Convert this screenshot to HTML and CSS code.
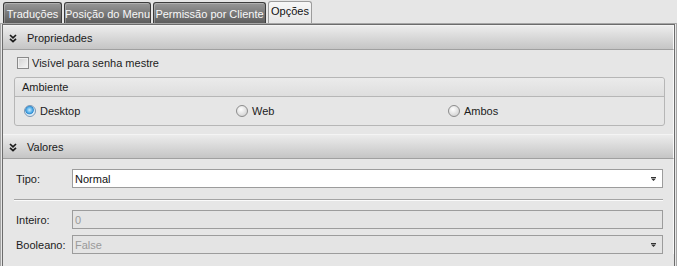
FILE: index.html
```html
<!DOCTYPE html>
<html lang="pt">
<head>
    <meta charset="UTF-8">
    <title>Opções</title>
    <link rel="stylesheet" href="styles.css">
</head>
<body>
    <div class="tabs">
        <div class="tab tab-1">Traduções</div>
        <div class="tab tab-2">Posição do Menu</div>
        <div class="tab tab-3">Permissão por Cliente</div>
        <div class="tab tab-4 active">Opções</div>
    </div>

    <div class="panel">
        <div class="panel-inner">
            <div class="section-header">
                <svg class="chevron" width="8" height="9" viewBox="0 0 8 9">
                    <path d="M1 1 L4 3.8 L7 1 M1 4.8 L4 7.6 L7 4.8" fill="none" stroke="#1a1a1a" stroke-width="1.7"/>
                </svg>
                <span>Propriedades</span>
            </div>
            <div class="section-body props">
                <label class="check-row">
                    <span class="checkbox"></span>
                    <span>Visível para senha mestre</span>
                </label>
                <div class="group">
                    <div class="group-title">Ambiente</div>
                    <div class="radio-row">
                        <div class="radio-item"><span class="radio checked"></span>Desktop</div>
                        <div class="radio-item"><span class="radio"></span>Web</div>
                        <div class="radio-item"><span class="radio"></span>Ambos</div>
                    </div>
                </div>
            </div>

            <div class="section-header">
                <svg class="chevron" width="8" height="9" viewBox="0 0 8 9">
                    <path d="M1 1 L4 3.8 L7 1 M1 4.8 L4 7.6 L7 4.8" fill="none" stroke="#1a1a1a" stroke-width="1.7"/>
                </svg>
                <span>Valores</span>
            </div>
            <div class="section-body values">
                <div class="field">
                    <div class="field-label">Tipo:</div>
                    <div class="field-box">
                        <span>Normal</span>
                        <svg class="arrow" width="5" height="4" viewBox="0 0 5 4">
                            <path d="M0 0 H5 V1 H0 Z M0 1.5 H5 L2.5 4 Z" fill="#333"/>
                        </svg>
                    </div>
                </div>
                <div class="separator"></div>
                <div class="field">
                    <div class="field-label">Inteiro:</div>
                    <div class="field-box disabled"><span>0</span></div>
                </div>
                <div class="field gap">
                    <div class="field-label">Booleano:</div>
                    <div class="field-box disabled">
                        <span>False</span>
                        <svg class="arrow" width="5" height="4" viewBox="0 0 5 4">
                            <path d="M0 0 H5 V1 H0 Z M0 1.5 H5 L2.5 4 Z" fill="#333"/>
                        </svg>
                    </div>
                </div>
            </div>
        </div>
    </div>
</body>
</html>
```

FILE: styles.css
```css
* {
    margin: 0;
    padding: 0;
    box-sizing: border-box;
}

body {
    font-family: 'Liberation Sans', Arial, sans-serif;
    font-size: 11px;
    color: #1c1c1c;
    background: #e6e6e6;
    width: 677px;
    height: 266px;
    overflow: hidden;
}

.tabs {
    display: flex;
    align-items: flex-end;
    gap: 2px;
    height: 23px;
    padding-left: 3px;
}

.tab {
    height: 21px;
    border: 1px solid #3c3c3c;
    border-bottom: none;
    border-radius: 3px 3px 0 0;
    background: linear-gradient(#979797, #5d5d5d);
    box-shadow: inset 1px 1px 0 rgba(255, 255, 255, 0.25);
    color: #f8f8f8;
    display: flex;
    align-items: center;
    justify-content: center;
    padding-top: 1px;
}

.tab-1 { width: 59px; }
.tab-2 { width: 87px; }
.tab-3 { width: 113px; }
.tab-4 { width: 44px; }

.tab.active {
    height: 22px;
    background: linear-gradient(#f7f7f7, #e6e6e6);
    border-color: #9c9c9c;
    box-shadow: none;
    color: #111;
    align-items: flex-start;
    padding-top: 3px;
}

.panel {
    border: 1px solid #a6a6a6;
    border-bottom: none;
    padding: 0 1px;
    height: 243px;
}

.panel-inner {
    border: 1px solid #6c6c6c;
    border-bottom: none;
    height: 100%;
    background: #e6e6e6;
}

.section-header {
    height: 25px;
    border-top: 1px solid #f4f4f4;
    border-bottom: 1px solid #a0a0a0;
    border-right: 1px solid #fafafa;
    background: linear-gradient(#ececec, #c5c5c5);
    display: flex;
    align-items: center;
    padding-left: 6px;
    color: #1a1a1a;
}

.chevron {
    margin-right: 10px;
    margin-top: 1px;
}

.section-body {
    border-right: 1px solid #fafafa;
}

.props {
    padding: 7px 8px 8px 11px;
}

.check-row {
    display: flex;
    align-items: center;
    height: 12px;
    padding-left: 3px;
}

.checkbox {
    width: 12px;
    height: 12px;
    border: 1px solid #8a8a8a;
    background: linear-gradient(135deg, #d2d2d2, #f6f6f6);
    box-shadow: inset 0 0 0 1px #f0f0f0;
    margin-right: 3px;
}

.group {
    margin-top: 8px;
    border: 1px solid #b6b6b6;
    border-radius: 3px;
}

.group-title {
    height: 19px;
    border-bottom: 1px solid #b6b6b6;
    background: linear-gradient(#ebebeb, #dedede);
    padding-left: 7px;
    display: flex;
    align-items: center;
    border-radius: 3px 3px 0 0;
}

.radio-row {
    display: grid;
    grid-template-columns: 212px 212px 212px;
    height: 28px;
    align-items: center;
    padding-left: 9px;
}

.radio-item {
    display: flex;
    align-items: center;
}

.radio {
    width: 12px;
    height: 12px;
    border-radius: 50%;
    border: 1px solid #8c8c8c;
    background: radial-gradient(circle at 40% 35%, #ffffff, #c8c8c8);
    margin-right: 4px;
}

.radio.checked {
    border-color: #7b97b4;
    background: radial-gradient(circle at 45% 40%, #c9ecff 0, #55aee8 35%, #2e8bd0 48%, #d9e9f5 58%, #eef2f5 100%);
}

.values {
    padding: 10px 10px 0 11px;
}

.field {
    display: flex;
    align-items: center;
}

.field.gap {
    margin-top: 6px;
}

.field-label {
    width: 56px;
    margin-left: 2px;
}

.field-box {
    flex: 1;
    height: 19px;
    border: 1px solid #9c9c9c;
    background: white;
    display: flex;
    align-items: center;
    justify-content: space-between;
    padding: 0 5px 0 2px;
    color: #111;
}

.field-box.disabled {
    background: #e4e4e4;
    color: #9a9a9a;
}

.arrow {
    margin-right: 1px;
}

.separator {
    margin: 11px 0 9px 0;
    border-top: 1px solid #a4a4a4;
    border-bottom: 1px solid #fafafa;
}
```
